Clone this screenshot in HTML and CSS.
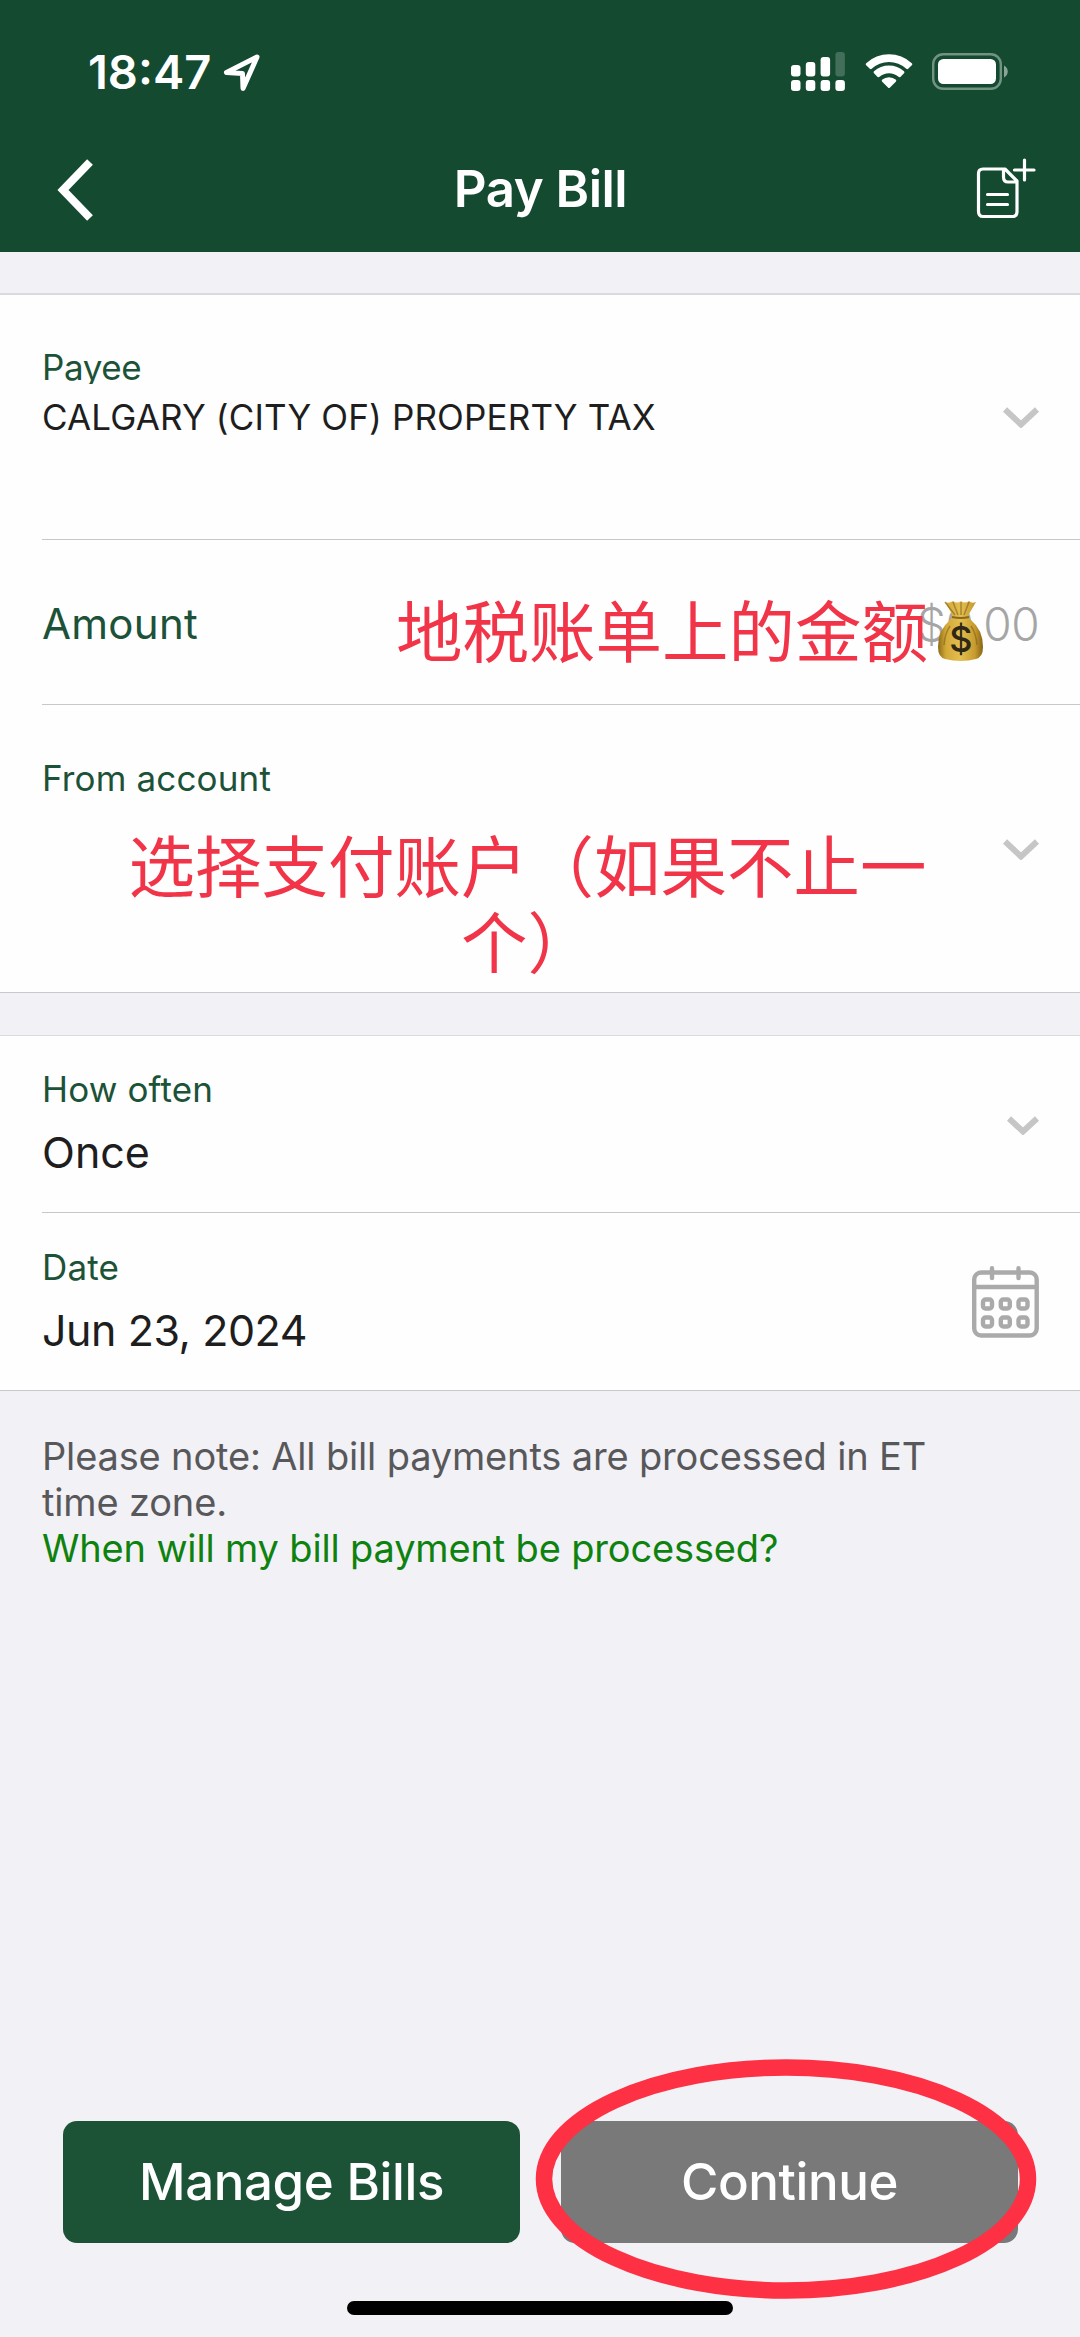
FILE: index.html
```
<!DOCTYPE html>
<html lang="en">
<head>
<meta charset="utf-8">
<title>Pay Bill</title>
<link rel="stylesheet" href="styles.css">
</head>
<body>
<div class="screen">
  <header class="header">
    <div class="status">
      <span class="time">18:47</span>
      <svg class="location" width="38" height="38" viewBox="0 0 38 38"><path d="M34 3 L3.500 18.500 L19.500 19.500 L20 34.500 Z" fill="none" stroke="#fff" stroke-width="5" stroke-linejoin="round"/></svg>
      <svg class="signal" width="54" height="40" viewBox="0 0 54 40" fill="#fff">
        <rect x="0" y="13" width="9.500" height="11.500" rx="3"/><rect x="14.800" y="10" width="9.500" height="14.500" rx="3"/><rect x="29.600" y="5" width="9.500" height="19.500" rx="3"/><rect x="44.400" y="0" width="9.500" height="24.500" rx="3" opacity=".2"/>
        <rect x="0" y="28" width="9.500" height="11" rx="3"/><rect x="14.800" y="28" width="9.500" height="11" rx="3"/><rect x="29.600" y="28" width="9.500" height="11" rx="3"/><rect x="44.400" y="28" width="9.500" height="11" rx="3"/>
      </svg>
      <svg class="wifi" width="48" height="36" viewBox="0 0 48 36" fill="#fff">
        <path d="M1.200 9.200 Q0.200 10.200 1.200 11.200 L4.800 14.800 Q5.700 15.500 6.700 14.700 A25.500 25.500 0 0 1 41.300 14.700 Q42.300 15.500 43.200 14.800 L46.800 11.200 Q47.800 10.200 46.800 9.200 A33.500 33.500 0 0 0 1.200 9.200Z"/>
        <path d="M9 17.300 Q8 18.300 9 19.300 L12.600 22.900 Q13.500 23.600 14.500 22.800 A14.500 14.500 0 0 1 33.500 22.800 Q34.500 23.600 35.400 22.900 L39 19.300 Q40 18.300 39 17.300 A22.500 22.500 0 0 0 9 17.300Z"/>
        <path d="M17 25.800 Q16.300 26.700 17.200 27.700 L23 33.500 Q24 34.700 25 33.500 L30.800 27.700 Q31.700 26.700 31 25.800 A11 11 0 0 0 17 25.800Z"/>
      </svg>
      <svg class="battery" width="76" height="37" viewBox="0 0 76 37"><rect x="1.200" y="1.200" width="67.600" height="34.600" rx="10" fill="none" stroke="#fff" stroke-opacity=".4" stroke-width="2.400"/><rect x="6" y="6" width="58" height="25" rx="5.500" fill="#fff"/><path d="M72 12.500 C77 15 77 22 72 24.500Z" fill="#fff" opacity=".5"/></svg>
    </div>
    <div class="nav">
      <svg class="back" width="36" height="62" viewBox="0 0 36 62"><path d="M33 3 L6 31 L33 59" fill="none" stroke="#fff" stroke-width="8"/></svg>
      <h1 class="title">Pay Bill</h1>
      <svg class="new-bill" width="60" height="61" viewBox="0 0 60 61" fill="none" stroke="#fff" stroke-width="3.200" stroke-linecap="round" stroke-linejoin="round"><path d="M28 11 H7 Q2.500 11 2.500 15.500 V53.500 Q2.500 58.500 7 58.500 H36.500 Q41 58.500 41 53.500 V23 L29 11 H27.500 V19 Q27.500 24 32 24 H40.500"/><path d="M11.500 36.500 H31.500 M11.500 46.500 H31.500 M38.500 12 H58 M48.500 2 V22"/></svg>
    </div>
  </header>

  <main>
    <section class="group">
      <div class="row payee">
        <div class="fields"><span class="label">Payee</span><span class="payee-name">CALGARY (CITY OF) PROPERTY TAX</span></div>
        <svg class="chevron" width="36" height="21" viewBox="0 0 36 21"><path d="M2 2.500 L18 17.500 L34 2.500"/></svg>
      </div>
      <div class="row amount">
        <span class="amount-label">Amount</span><span class="amount-value">$0.00</span>
        <div class="note note-amount">
          <span class="note-text">地税账单上的金额</span>
          <svg width="47" height="63" viewBox="0 0 47 63">
            <defs><linearGradient id="bag" x1="0" x2="1"><stop offset="0" stop-color="#8d6a16"/><stop offset=".18" stop-color="#d3aa38"/><stop offset=".5" stop-color="#e3bf50"/><stop offset=".82" stop-color="#c79b2d"/><stop offset="1" stop-color="#866315"/></linearGradient></defs>
            <path d="M8 3 Q12 5 16 2 Q20 5 24 2 Q28 5 32 2 Q35 5 39 3 L32 15 Q31 18 34 21 Q46 31 46 48 Q46 58 39 60 Q24 64 8 60 Q1 58 1 48 Q1 31 13 21 Q16 18 15 15Z" fill="url(#bag)"/>
            <path d="M8 3 L18 16 M16 3 L21 16 M24 3 V16 M32 3 L27 16 M13 27 Q8 34 7 46 M34 27 Q39 34 40 46" fill="none" stroke="#83611b" stroke-width="1.500" opacity=".6"/>
            <path d="M15 18 Q24 20 32 18" fill="none" stroke="#8a671c" stroke-width="2"/>
            <text x="24" y="53" text-anchor="middle" class="bag-sign">$</text>
          </svg>
        </div>
      </div>
      <div class="row account">
        <span class="label">From account</span>
        <svg class="chevron" width="36" height="21" viewBox="0 0 36 21"><path d="M2 2.500 L18 17.500 L34 2.500"/></svg>
        <div class="note note-account">选择支付账户（如果不止一<br>个）</div>
      </div>
    </section>

    <section class="group schedule">
      <div class="row">
        <div class="fields"><span class="label">How often</span><span class="value">Once</span></div>
        <svg class="chevron small" width="32" height="19" viewBox="0 0 32 19"><path d="M2 2.500 L16 15.500 L30 2.500"/></svg>
      </div>
      <div class="row date">
        <div class="fields"><span class="label">Date</span><span class="value date-value">Jun 23, 2024</span></div>
        <svg class="calendar" width="67" height="73" viewBox="0 0 67 73" fill="none" stroke="#aaa" stroke-width="4.400"><rect x="2.200" y="6.500" width="62.500" height="63" rx="7"/><path d="M2 21 H65"/><path d="M20 2.200 V12 M46.500 2.200 V12" stroke-linecap="round"/><g><rect x="11" y="33.500" width="9" height="9" rx="2.500"/><rect x="28.800" y="33.500" width="9" height="9" rx="2.500"/><rect x="46.500" y="33.500" width="9" height="9" rx="2.500"/><rect x="11" y="51.500" width="9" height="9" rx="2.500"/><rect x="28.800" y="51.500" width="9" height="9" rx="2.500"/><rect x="46.500" y="51.500" width="9" height="9" rx="2.500"/></g></svg>
      </div>
    </section>

    <p class="info">Please note: All bill payments are processed in ET<br>time zone.<br><a>When will my bill payment be processed?</a></p>
  </main>

  <footer class="footer">
    <div class="actions">
      <button class="button">Manage Bills</button>
      <button class="button disabled">Continue</button>
      <svg class="circle" width="502" height="240" viewBox="0 0 502 240"><ellipse cx="251" cy="120" rx="242" ry="111.500"/></svg>
    </div>
    <div class="home"></div>
  </footer>
</div>
</body>
</html>
```
FILE: styles.css
```
* { box-sizing: border-box; }
body { margin: 0; font-family: Inter, "Noto Sans CJK SC", sans-serif; color: #1e1e1f; background: #f2f1f6; }
.screen { width: 1080px; height: 2337px; display: flex; flex-direction: column; overflow: hidden; }
svg { display: block; flex: none; }
.header { height: 252px; background: #144a30; color: #fff; padding: 42px 44px 0 57px; }
.status { display: flex; height: 60px; padding: 0 28px 0 31px; }
.time { font-size: 47px; line-height: 60px; font-weight: 600; margin-right: 12px; }
.location { margin: 12px auto 0 0; }
.signal { margin: 10px 20px 0 0; }
.wifi { margin: 12px 19px 0 0; }
.battery { margin-top: 11px; }
.nav { display: grid; grid-template-columns: 60px 1fr 60px; margin-top: 56px; height: 62px; }
.back { margin-top: 1px; }
.title { margin: 0; padding-right: 12px; text-align: center; font-size: 51px; line-height: 62px; font-weight: 600; letter-spacing: -.5px; }
main { flex: 1; }
.group { margin-top: 41px; border-top: 2px solid #dadade; border-bottom: 1px solid #c9c9cc; background: #fefefe; }
.row { position: relative; display: flex; align-items: center; margin-left: 42px; padding-right: 41px; border-bottom: 1px solid #c8c8ca; }
.row:last-child { border-bottom: 0; }
.fields { display: flex; flex-direction: column; margin-right: auto; }
.label { font-size: 35px; line-height: 43px; letter-spacing: .15px; color: #1c5238; }
.chevron { fill: none; stroke: #c6c6c6; stroke-width: 6; }
.payee { height: 245px; align-items: flex-start; padding-top: 55px; }
.payee .label { line-height: 34px; letter-spacing: -.4px; overflow: hidden; }
.payee-name { font-size: 35px; line-height: 67px; letter-spacing: .15px; }
.payee .chevron { margin-top: 57px; }
.amount { height: 165px; justify-content: space-between; padding-top: 3px; }
.amount-label { font-size: 42px; line-height: 50px; letter-spacing: .3px; color: #1c5238; }
.amount-value { font-size: 46px; line-height: 50px; font-weight: 300; letter-spacing: -.6px; color: #a5a5a5; }
.account { height: 287px; align-items: flex-start; justify-content: space-between; padding-top: 52px; }
.account .chevron { margin-top: 82px; }
.note { position: absolute; color: #f13447; font-family: "Noto Sans CJK SC", sans-serif; font-size: 66.500px; }
.note-amount { left: 354px; top: 51px; display: flex; gap: 9px; line-height: 74px; white-space: nowrap; }
.note-amount svg { margin-top: 8px; }
.bag-sign { font: 500 36px Inter, sans-serif; fill: #302817; }
.note-account { left: 43px; top: 120px; width: 885px; text-align: center; line-height: 76px; }
.schedule { margin-top: 42px; border-top-width: 1px; }
.schedule .row { height: 177px; align-items: flex-start; padding-top: 32px; }
.schedule .date { padding-top: 33px; }
.schedule .fields { gap: 16px; }
.value { font-size: 43px; line-height: 51px; }
.date-value { letter-spacing: -.45px; }
.small { margin-top: 48px; }
.calendar { margin-top: 20px; }
.info { margin: 42px; font-size: 38px; line-height: 46px; letter-spacing: -.16px; color: #58585b; }
.info a { color: #0e820e; }
.footer { height: 216px; }
.actions { position: relative; display: grid; grid-template-columns: 457px 457px; gap: 41px; margin-left: 63px; }
.button { height: 122px; padding: 0 0 2px; border: 0; border-radius: 14px; background: #1c5337; color: #fff; font: 500 51px Inter, sans-serif; letter-spacing: -.4px; }
.disabled { background: #787978; }
.circle { position: absolute; left: 472px; top: -62px; fill: none; stroke: #fd3044; stroke-width: 16.500; }
.home { width: 386px; height: 14px; margin: 58px auto 0; border-radius: 7px; background: #000; }
```
